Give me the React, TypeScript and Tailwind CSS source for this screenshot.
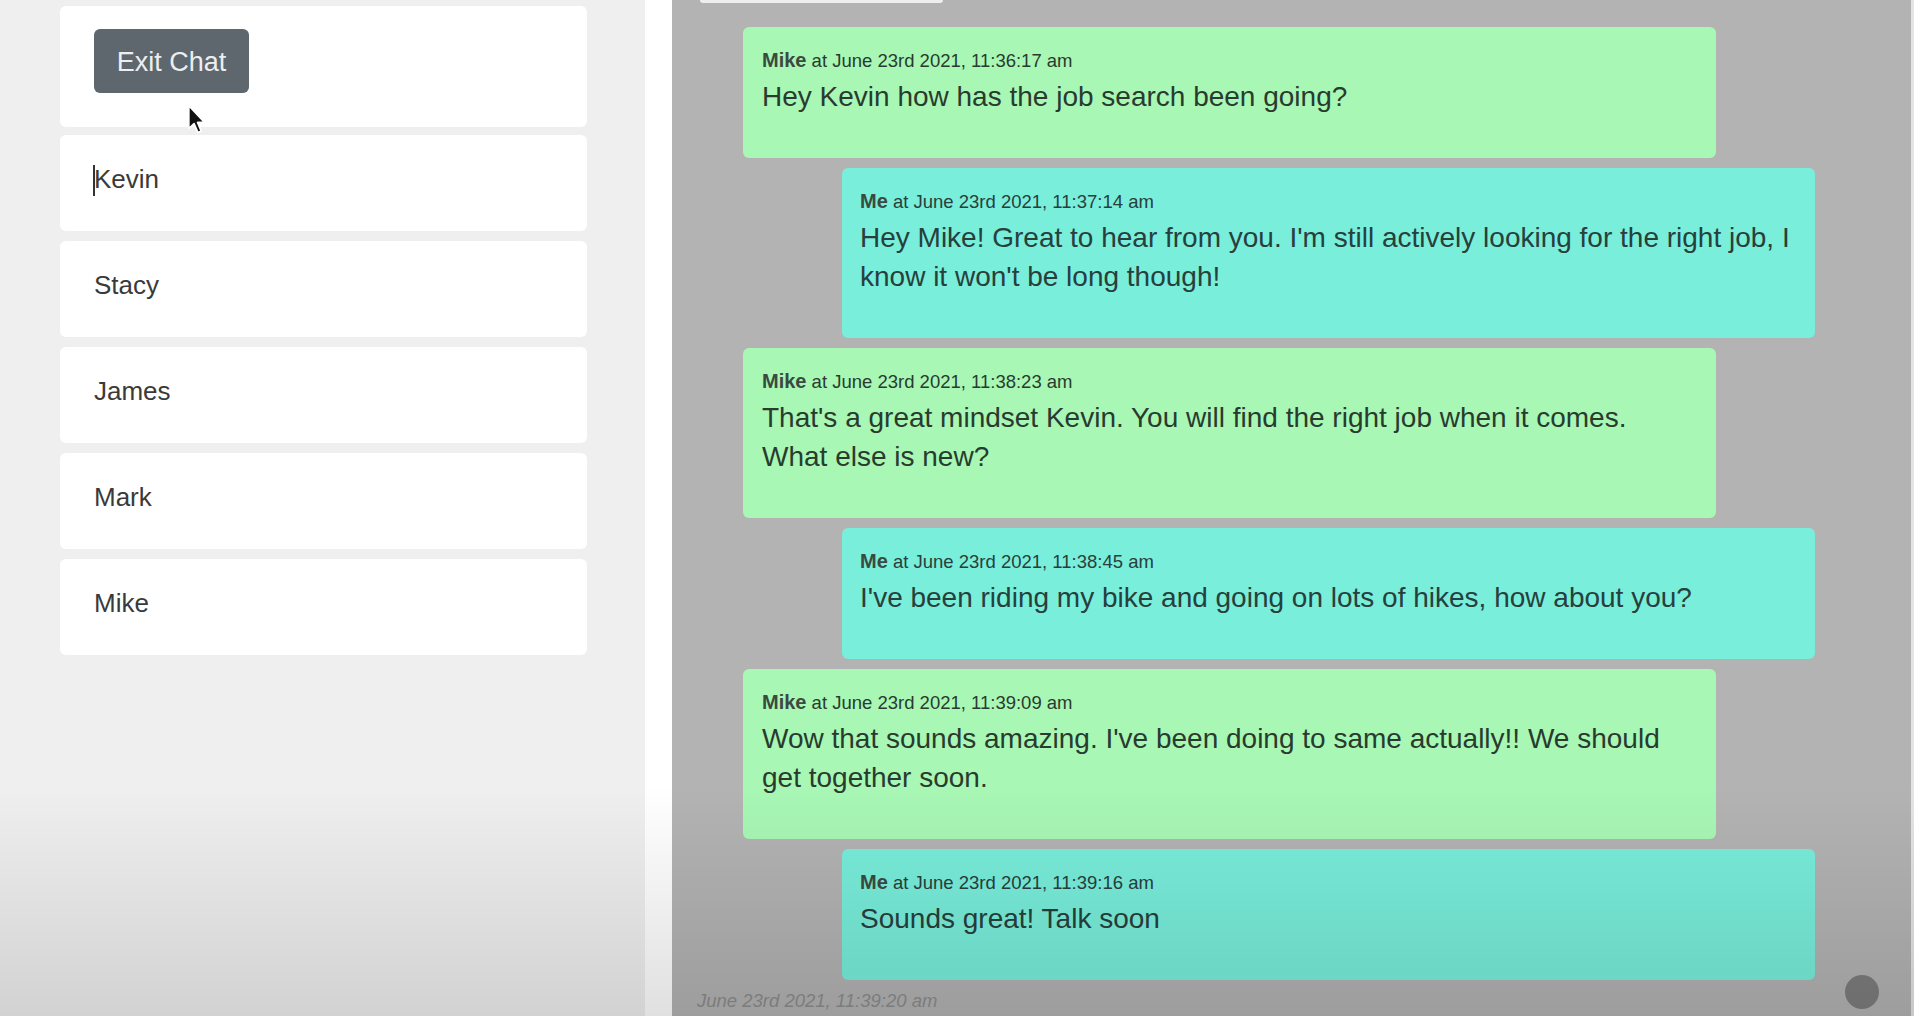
import React from "react";

type Msg = { from: "Mike" | "Me"; time: string; lines: string[] };

const messages: Msg[] = [
  { from: "Mike", time: "June 23rd 2021, 11:36:17 am", lines: ["Hey Kevin how has the job search been going?"] },
  {
    from: "Me",
    time: "June 23rd 2021, 11:37:14 am",
    lines: [
      "Hey Mike! Great to hear from you. I'm still actively looking for the right job, I",
      "know it won't be long though!",
    ],
  },
  {
    from: "Mike",
    time: "June 23rd 2021, 11:38:23 am",
    lines: ["That's a great mindset Kevin. You will find the right job when it comes.", "What else is new?"],
  },
  { from: "Me", time: "June 23rd 2021, 11:38:45 am", lines: ["I've been riding my bike and going on lots of hikes, how about you?"] },
  {
    from: "Mike",
    time: "June 23rd 2021, 11:39:09 am",
    lines: ["Wow that sounds amazing. I've been doing to same actually!! We should", "get together soon."],
  },
  { from: "Me", time: "June 23rd 2021, 11:39:16 am", lines: ["Sounds great! Talk soon"] },
];

const contacts = ["Kevin", "Stacy", "James", "Mark", "Mike"];

function Bubble({ m }: { m: Msg }) {
  const mine = m.from === "Me";
  return (
    <div
      className={
        mine
          ? "ml-[170px] w-[973px] rounded-md bg-[#79eedb] pl-[18px] pr-[16px] pt-[20px] pb-[42px] text-[#27403b]"
          : "ml-[71px] w-[973px] rounded-md bg-[#a8f7b5] pl-[19px] pr-[16px] pt-[20px] pb-[42px] text-[#293b2e]"
      }
    >
      <div className="h-[26px] leading-[26px] whitespace-nowrap">
        <span className="text-[20px] font-bold text-[#3b4a40]">{m.from}</span>
        <span className="text-[18.5px]"> at {m.time}</span>
      </div>
      <div className="mt-[4px] text-[28px] leading-[39px]">
        {m.lines.map((l, i) => (
          <div key={i} className="whitespace-nowrap">
            {l}
          </div>
        ))}
      </div>
    </div>
  );
}

export default function App() {
  return (
    <div className="relative flex h-[1016px] w-[1914px] overflow-hidden font-['Liberation_Sans',Arial,sans-serif]">
      {/* Sidebar */}
      <div className="w-[645px] shrink-0 bg-[#efefef] pl-[60px] pt-[6px]">
        <div className="flex w-[527px] flex-col">
          <div className="h-[121px] rounded-md bg-white pl-[34px] pt-[23px]">
            <button className="h-[64px] w-[155px] rounded-md bg-[#5e676e] pt-[3px] text-[27px] text-[#eceef0]">
              Exit Chat
            </button>
          </div>
          <div className="mt-[8px] flex flex-col gap-[10px]">
            {contacts.map((c, i) => (
              <div key={c} className="h-[96px] rounded-md bg-white pl-[34px] pt-[26px]">
                <span className="relative text-[26px] leading-[36px] text-[#3a3a3a]">
                  {i === 0 && <span className="absolute left-[-1px] top-[1px] h-[31px] w-[2px] bg-[#333]" />}
                  {c}
                </span>
              </div>
            ))}
          </div>
        </div>
      </div>

      {/* Divider strip */}
      <div className="w-[27px] shrink-0 bg-white" />

      {/* Chat panel */}
      <div className="relative w-[1239px] shrink-0 bg-[#b3b3b3]">
        <div className="ml-[28px] h-[3px] w-[243px] rounded-b-sm bg-[#eeeeee]" />
        <div className="mt-[24px] flex flex-col gap-[10px]">
          {messages.map((m, i) => (
            <Bubble key={i} m={m} />
          ))}
        </div>
        <div className="mt-[7px] pl-[25px] text-[18.5px] italic leading-[27px] text-[#8c8c8c] whitespace-nowrap">
          June 23rd 2021, 11:39:20 am
        </div>
        <div className="absolute bottom-[7px] right-[32px] h-[34px] w-[34px] rounded-full bg-[#7d7d7d]" />
      </div>

      <div className="flex-1 bg-[#e4e4e4]" />

      {/* Video vignette darkening at bottom */}
      <div className="pointer-events-none absolute inset-x-0 bottom-0 h-[230px] bg-linear-to-b from-transparent to-[rgba(0,0,0,0.12)]" />

      {/* Mouse cursor */}
      <svg className="pointer-events-none absolute left-[187px] top-[104px]" width="20" height="31" viewBox="0 0 12 19">
        <path d="M1 1 L1 15 L4.2 12 L6.6 17.5 L8.6 16.6 L6.3 11.3 L10.6 11.3 Z" fill="#111" stroke="#fff" strokeWidth="1" strokeLinejoin="round" />
      </svg>
    </div>
  );
}
